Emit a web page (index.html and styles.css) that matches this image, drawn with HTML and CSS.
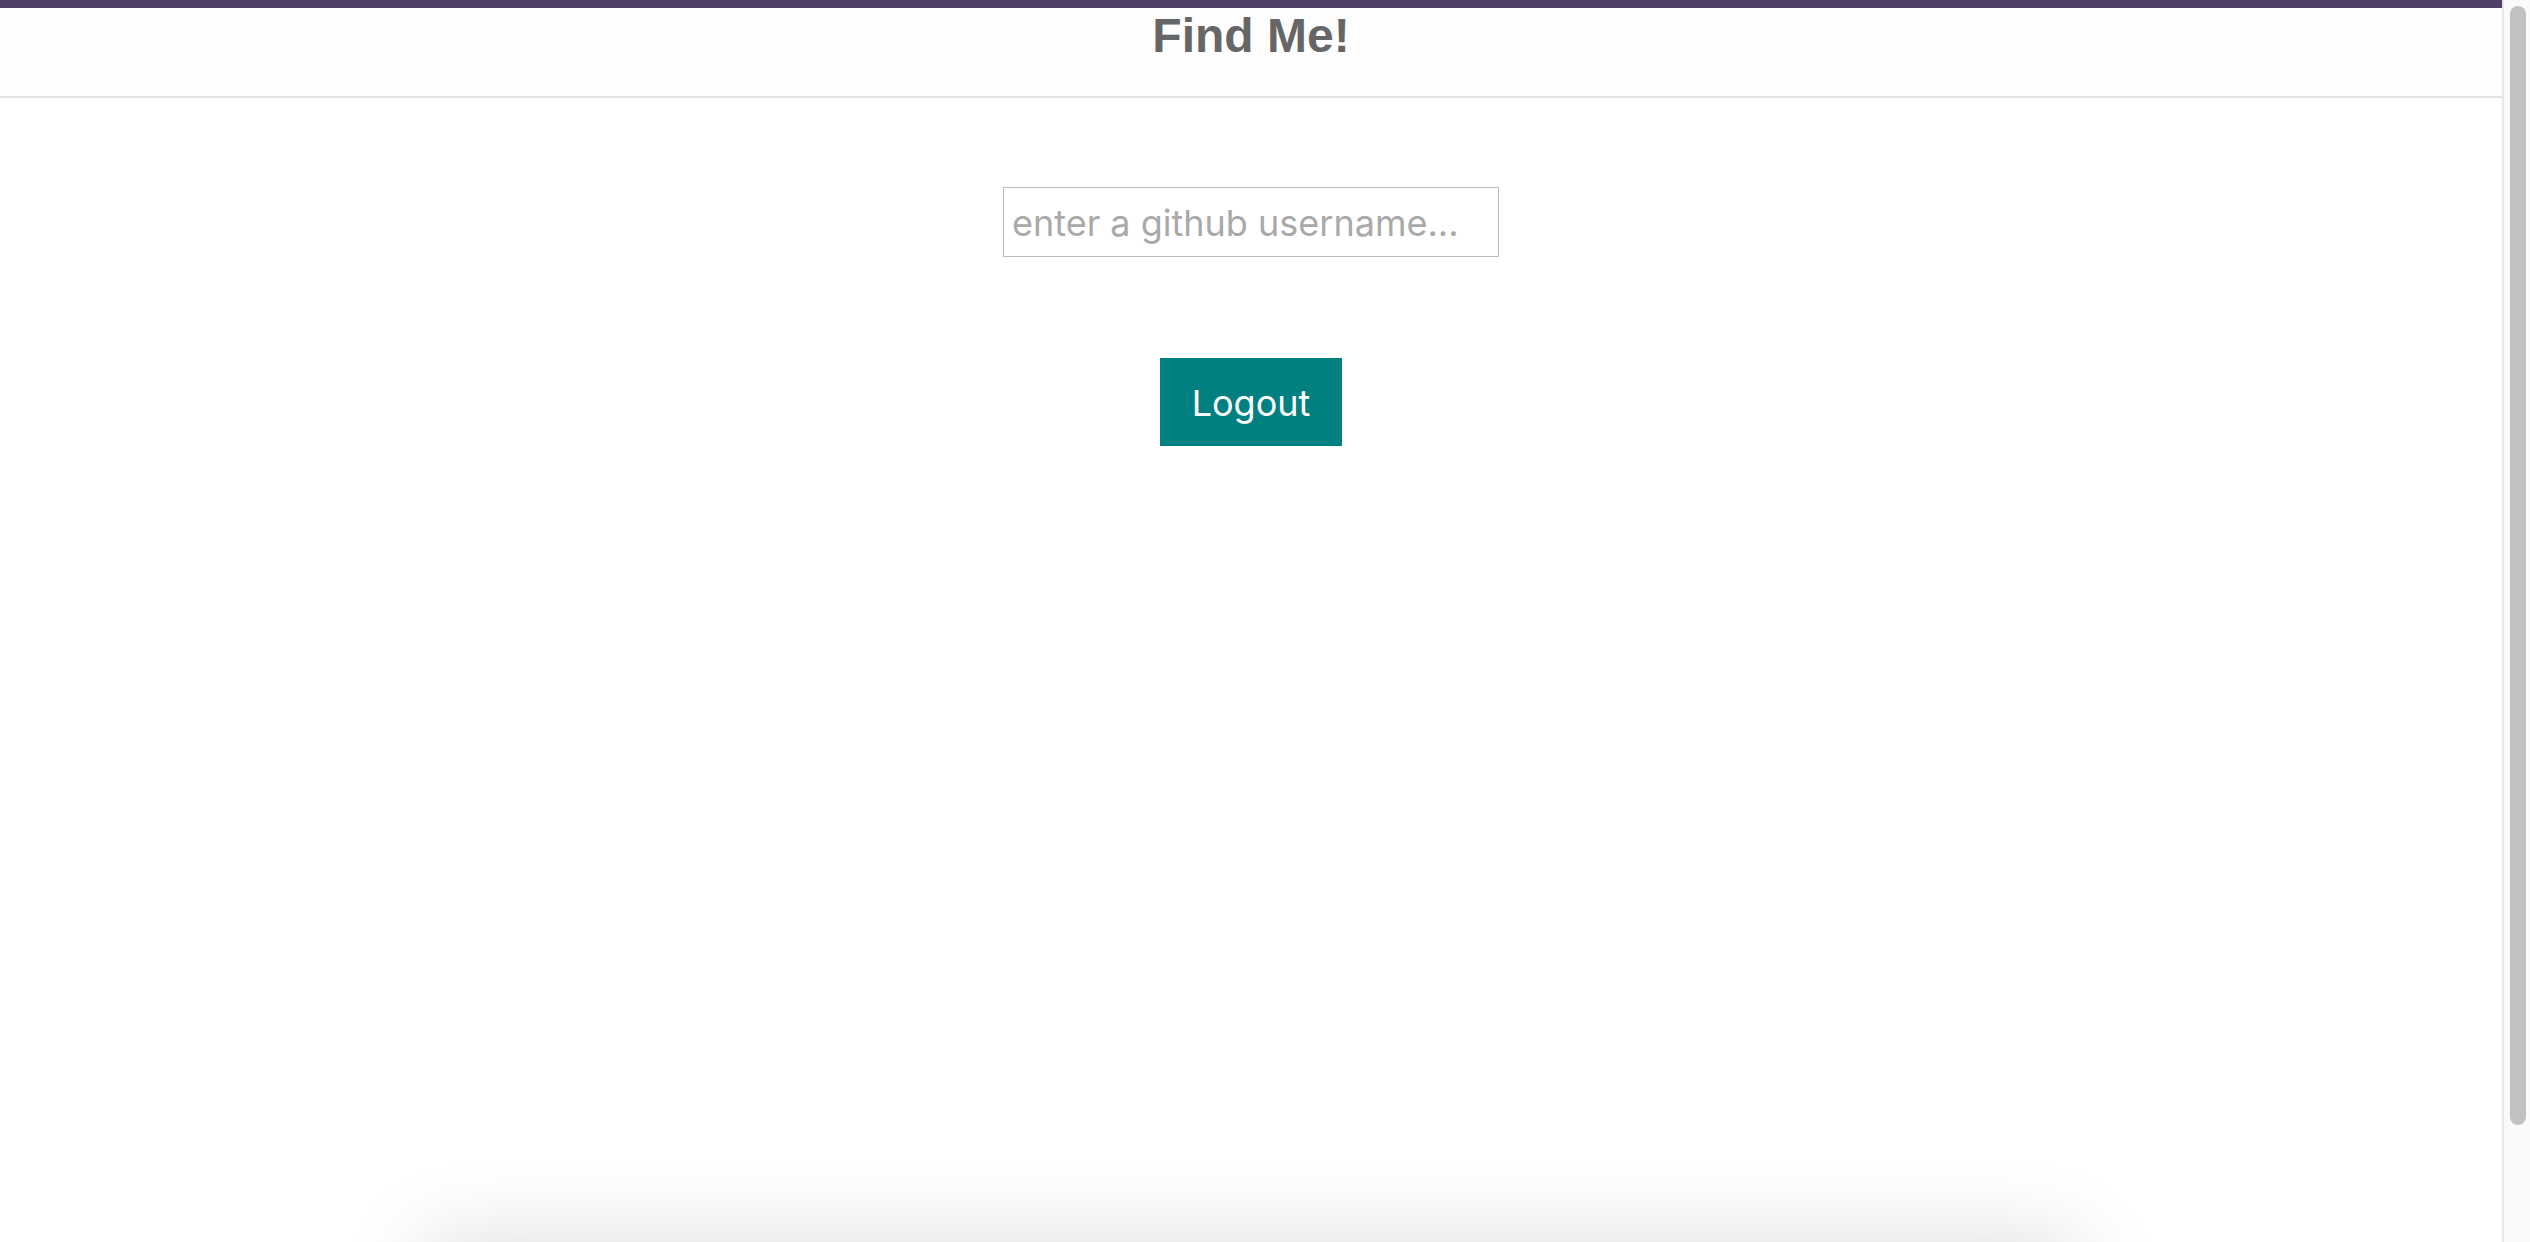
FILE: index.html
```html
<!DOCTYPE html>
<html lang="en">
<head>
<meta charset="utf-8">
<title>Find Me!</title>
<link rel="stylesheet" href="styles.css">
</head>
<body>
<div class="page">
  <header class="header"><h1 class="title">Find Me!</h1></header>
  <main class="content">
    <form class="search">
      <input class="username" type="text" aria-label="GitHub username" placeholder="enter a github username...">
    </form>
    <button class="logout" type="button">Logout</button>
  </main>
  <div class="window-shadow"></div>
</div>
<div class="scrollbar"><div class="thumb"></div></div>
</body>
</html>
```
FILE: styles.css
```css
* {
  box-sizing: border-box;
}

body {
  display: flex;
  height: 100vh;
  margin: 0;
  overflow: hidden;
  background: #fff;
  font-family: Inter, "Liberation Sans", sans-serif;
  font-size: 36px;
}

.page {
  position: relative;
  flex: 1;
  overflow: hidden;
}

.header {
  height: 98px;
  border-top: 8px solid #4d3f66;
  border-bottom: 2px solid #e5e0dd;
  background: #fdfdfd;
  text-align: center;
}

.title {
  margin: 0;
  color: #666;
  font: bold 48px/56px "Liberation Sans", Arial, sans-serif;
}

.content {
  display: flex;
  flex-direction: column;
  align-items: center;
  gap: 101px;
  padding-top: 89px;
}

.search {
  display: flex;
}

.username {
  width: 496px;
  height: 70px;
  padding: 4px 8px 2px;
  border: 1px solid #bbb;
  border-radius: 0;
  background: #fff;
  font: inherit;
}

.username::placeholder {
  color: #a9a9a9;
  opacity: 1;
}

.logout {
  height: 88px;
  padding: 2px 32px 0;
  border: 0;
  background: #008080;
  color: #fff;
  font: inherit;
}

.window-shadow {
  position: absolute;
  top: 100%;
  right: 17%;
  left: 17%;
  height: 200px;
  box-shadow: 0 0 88px rgba(0, 0, 0, 0.14);
}

.scrollbar {
  width: 28px;
  padding: 6px 4px 6px 6px;
  border-left: 2px solid #e7e7e7;
  background: #fafafa;
}

.thumb {
  width: 16px;
  height: 91%;
  border-radius: 8px;
  background: #c1c1c1;
}
```
